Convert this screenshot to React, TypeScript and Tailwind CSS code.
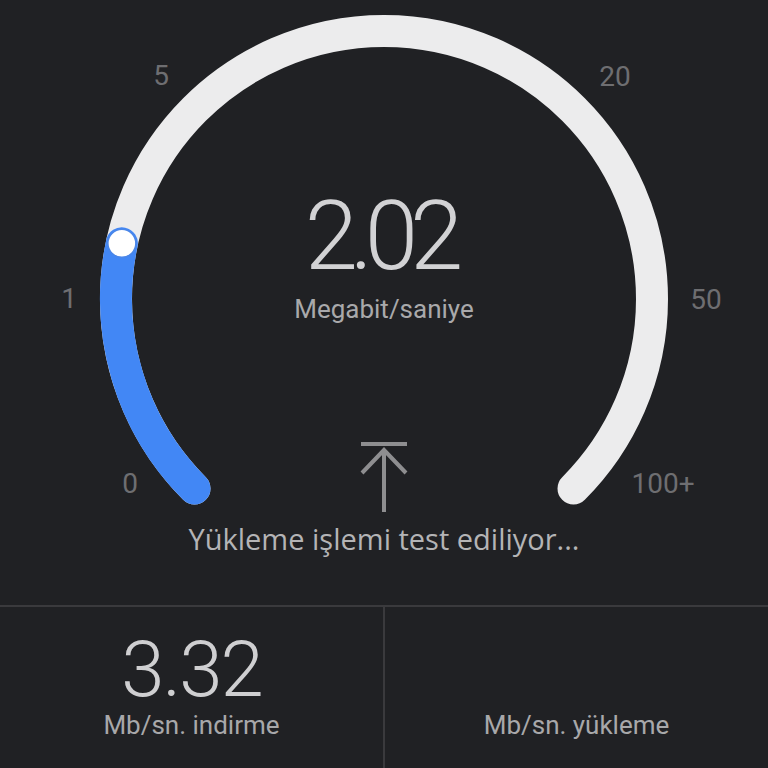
const CX = 384
const CY = 299
const R = 268

function point(deg: number) {
    const a = (deg * Math.PI) / 180
    return { x: CX + R * Math.sin(a), y: CY - R * Math.cos(a) }
}

const ticks = [
    { label: "0", x: 130, y: 493 },
    { label: "1", x: 69, y: 308 },
    { label: "5", x: 161, y: 85 },
    { label: "20", x: 615, y: 86 },
    { label: "50", x: 706, y: 309 },
    { label: "100+", x: 663, y: 493 },
]

function Gauge({ angle }: { angle: number }) {
    const start = point(-135)
    const end = point(135)
    const knob = point(angle)
    const large = angle + 135 > 180 ? 1 : 0

    return (
        <svg className="absolute inset-0" width="768" height="606" viewBox="0 0 768 606">
            <path
                d={`M ${start.x} ${start.y} A ${R} ${R} 0 1 1 ${end.x} ${end.y}`}
                fill="none"
                stroke="#ececed"
                strokeWidth="32"
                strokeLinecap="round"
            />
            <path
                d={`M ${start.x} ${start.y} A ${R} ${R} 0 ${large} 1 ${knob.x} ${knob.y}`}
                fill="none"
                stroke="#4287f5"
                strokeWidth="32"
                strokeLinecap="round"
            />
            <circle cx={knob.x} cy={knob.y} r="14" fill="#ffffff" stroke="#4a86e8" strokeWidth="1.5" />
            {ticks.map((t) => (
                <text
                    key={t.label}
                    x={t.x}
                    y={t.y}
                    textAnchor="middle"
                    fill="#6e6e71"
                    fontSize="28"
                    fontFamily="Roboto, sans-serif"
                >
                    {t.label}
                </text>
            ))}
        </svg>
    )
}

// upload arrow: bar on top, chevron and long stem
function UploadArrow() {
    return (
        <svg width="50" height="72" viewBox="0 0 50 72" fill="none" stroke="#8e8e90" strokeWidth="4">
            <path d="M2 2 H48" />
            <path d="M25 8 V70" />
            <path d="M3 31 L25 8 L47 31" strokeLinejoin="miter" />
        </svg>
    )
}

function Stat({ value, label }: { value?: string; label: string }) {
    return (
        <div className="flex flex-1 flex-col items-center justify-end pb-[30px]">
            {value && (
                <span className="text-[78px] leading-none font-light tracking-[-2px] text-[#cfcfd1]">{value}</span>
            )}
            <span className="mt-[3px] text-[26px] leading-none text-[#a8a8aa]">{label}</span>
        </div>
    )
}

export default function App() {
    return (
        <div className="flex h-[768px] w-[768px] flex-col bg-[#202124] font-['Roboto',sans-serif] overflow-hidden">
            <section className="relative h-[605px] shrink-0">
                <Gauge angle={-78} />
                <div className="relative flex flex-col items-center pt-[188px]">
                    <span className="text-[96px] leading-none font-light tracking-[-8px] text-[#d2d2d4] pr-[8px]">2.02</span>
                    <span className="mt-[12px] text-[26px] leading-none text-[#a9a9ab]">Megabit/saniye</span>
                    <div className="mt-[120px]">
                        <UploadArrow />
                    </div>
                    <span className="mt-[10px] font-['Open_Sans',sans-serif] text-[29px] leading-none text-[#b4b4b6]">
                        Yükleme işlemi test ediliyor...
                    </span>
                </div>
            </section>
            <div className="flex flex-1 border-t-2 border-[#3a3a3d]">
                <Stat value="3.32" label="Mb/sn. indirme" />
                <div className="w-[2px] bg-[#3a3a3d]" />
                <Stat label="Mb/sn. yükleme" />
            </div>
        </div>
    )
}
